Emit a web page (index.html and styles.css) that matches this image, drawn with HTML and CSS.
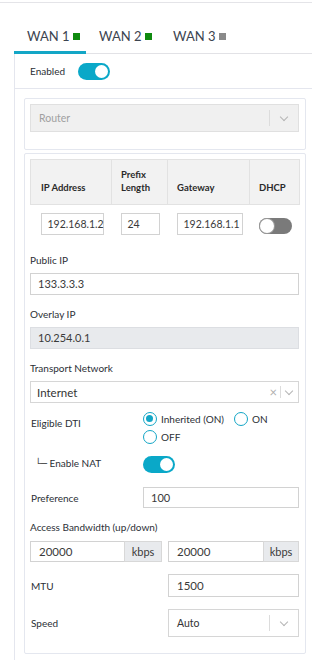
FILE: index.html
```html
<!DOCTYPE html>
<html lang="en">
<head>
    <meta charset="UTF-8">
    <meta name="viewport" content="width=device-width, initial-scale=1.0">
    <title>WAN</title>
    <link rel="stylesheet" href="styles.css">
</head>
<body>
    <div class="top-line"></div>

    <div class="wrap">
        <div class="tabs">
            <div class="tab active">WAN 1<span class="dot green"></span></div>
            <div class="tab">WAN 2<span class="dot green"></span></div>
            <div class="tab">WAN 3<span class="dot grey"></span></div>
        </div>

        <div class="panel">
            <div class="enabled-row">
                <span class="label">Enabled</span>
                <span class="toggle on"></span>
            </div>

            <div class="panel-body">
                <div class="card card-mode">
                    <div class="select disabled">
                        <span class="select-value">Router</span>
                        <span class="sep"></span>
                        <span class="chev"></span>
                    </div>
                </div>

                <div class="card card-main">
                    <table class="ip-table">
                        <colgroup>
                            <col class="col-ip">
                            <col class="col-prefix">
                            <col class="col-gw">
                            <col class="col-dhcp">
                        </colgroup>
                        <thead>
                            <tr>
                                <th>IP Address</th>
                                <th>Prefix<br>Length</th>
                                <th>Gateway</th>
                                <th>DHCP</th>
                            </tr>
                        </thead>
                        <tbody>
                            <tr>
                                <td><div class="input in-ip">192.168.1.2</div></td>
                                <td><div class="input in-prefix">24</div></td>
                                <td><div class="input in-gw">192.168.1.1</div></td>
                                <td><span class="toggle off"></span></td>
                            </tr>
                        </tbody>
                    </table>

                    <div class="group first">
                        <div class="label">Public IP</div>
                        <div class="input wide">133.3.3.3</div>
                    </div>

                    <div class="group">
                        <div class="label">Overlay IP</div>
                        <div class="input wide readonly">10.254.0.1</div>
                    </div>

                    <div class="group">
                        <div class="label">Transport Network</div>
                        <div class="select transport">
                            <span class="select-value">Internet</span>
                            <span class="clear">&times;</span>
                            <span class="sep short"></span>
                            <span class="chev"></span>
                        </div>
                    </div>

                    <div class="row dti-row">
                        <div class="label">Eligible DTI</div>
                        <div class="radios">
                            <span class="radio-item"><span class="radio checked"></span>Inherited (ON)</span>
                            <span class="radio-item"><span class="radio"></span>ON</span>
                            <span class="radio-item"><span class="radio"></span>OFF</span>
                        </div>
                    </div>

                    <div class="row nat-row">
                        <div class="label nat-label"><span class="tree">└─</span> Enable NAT</div>
                        <div><span class="toggle on"></span></div>
                    </div>

                    <div class="row pref-row">
                        <div class="label">Preference</div>
                        <div class="input">100</div>
                    </div>

                    <div class="group bw-group">
                        <div class="label">Access Bandwidth (up/down)</div>
                        <div class="halves">
                            <div class="input-group">
                                <div class="input">20000</div>
                                <span class="addon">kbps</span>
                            </div>
                            <div class="input-group">
                                <div class="input">20000</div>
                                <span class="addon">kbps</span>
                            </div>
                        </div>
                    </div>

                    <div class="halves half-row mtu-row">
                        <div class="label">MTU</div>
                        <div class="input">1500</div>
                    </div>

                    <div class="halves half-row speed-row">
                        <div class="label">Speed</div>
                        <div class="select speed">
                            <span class="select-value">Auto</span>
                            <span class="sep"></span>
                            <span class="chev"></span>
                        </div>
                    </div>
                </div>
            </div>
        </div>
    </div>
</body>
</html>
```

FILE: styles.css
```css
body {
    margin: 0;
    background: #ffffff;
    font-family: Lato, "Open Sans", sans-serif;
    color: #333;
    overflow: hidden;
    height: 660px;
}

.top-line {
    margin-top: 2px;
    border-top: 1px solid #e4e4e8;
}

.wrap {
    padding-left: 14px;
}

/* Tabs */
.tabs {
    display: flex;
    border-bottom: 1px solid #e2e2e6;
    padding-top: 24px;
}

.tab {
    font-size: 13px;
    line-height: 18px;
    color: #3c4450;
    padding: 0 0 6px 13px;
    border-bottom: 3px solid transparent;
    margin-bottom: -1px;
    display: flex;
    align-items: center;
}

.tab:nth-child(1) {
    width: 59px;
}

.tab:nth-child(2) {
    width: 61px;
}

.tab.active {
    border-bottom-color: #13a6c6;
}

.dot {
    display: inline-block;
    width: 7px;
    height: 7px;
    margin-left: 3px;
    margin-top: 1px;
}

.dot.green {
    background: #0f8a0f;
}

.dot.grey {
    background: #8a8a8a;
}

/* Panel */
.panel {
    border-left: 1px solid #e4e6ee;
    height: 620px;
}

.enabled-row {
    height: 34px;
    border-bottom: 1px solid #e4e6ee;
    display: flex;
    align-items: center;
    padding-left: 15px;
}

.enabled-row .label {
    margin-right: 13px;
}

.label {
    font-size: 10px;
    line-height: 14px;
    color: #2b2f36;
}

.panel-body {
    padding: 9px 6px 0 9px;
}

.card {
    border: 1px solid #e4e7ef;
    border-radius: 2px;
}

.card-mode {
    padding: 5px 6px 17px 5px;
}

.card-main {
    margin-top: 3px;
    padding: 5px 6px 16px 5px;
}

/* Toggle */
.toggle {
    display: inline-block;
    position: relative;
    width: 32px;
    height: 17px;
    border-radius: 9px;
    background: #0aa8c8;
    vertical-align: middle;
}

.toggle::after {
    content: "";
    position: absolute;
    top: 2px;
    right: 2px;
    width: 13px;
    height: 13px;
    border-radius: 50%;
    background: #fff;
}

.toggle.off {
    background: #7a7a7a;
    width: 33px;
    height: 16px;
}

.toggle.off::after {
    right: auto;
    left: 1px;
    top: 1px;
    width: 14px;
    height: 14px;
    box-shadow: 0 0 0 1px #9a9a9a;
}

/* Selects */
.select {
    display: flex;
    align-items: center;
    border: 1px solid #d6d6d6;
    background: #fff;
    height: 20px;
    padding-left: 6px;
    font-size: 11.5px;
    color: #333;
}

.select.disabled {
    height: 26px;
    background: #f0f0f0;
    border-color: #e0e0e0;
    color: #a0a0a0;
    font-size: 10.5px;
    padding-left: 8px;
}

.select-value {
    flex: 1;
}

.sep {
    width: 1px;
    height: 16px;
    background: #dcdcdc;
}

.sep.short {
    height: 12px;
}

.chev {
    width: 5px;
    height: 5px;
    border-right: 1px solid #b5b5b5;
    border-bottom: 1px solid #b5b5b5;
    transform: rotate(45deg);
    margin: -3px 11px 0 11px;
}

.transport .chev {
    margin: -3px 6px 0 5px;
}

.clear {
    color: #b0b0b0;
    font-size: 13px;
    margin-right: 3px;
}

.speed {
    height: 26px;
    padding-left: 8px;
    font-size: 10.5px;
}

/* Inputs */
.input {
    box-sizing: border-box;
    height: 22px;
    border: 1px solid #d2d2d2;
    background: #fff;
    font-size: 11px;
    line-height: 20px;
    padding: 0 7px;
    color: #3a3a3a;
}

.input.readonly {
    background: #e8eaed;
    border-color: #dcdee2;
}

.group {
    margin-top: 12px;
}

.group.first {
    margin-top: 8px;
}

.group .label {
    margin-bottom: 6px;
}

/* IP table */
.ip-table {
    width: 269px;
    border-collapse: collapse;
    table-layout: fixed;
}

.col-ip { width: 81px; }
.col-prefix { width: 56px; }
.col-gw { width: 82px; }
.col-dhcp { width: 50px; }

.ip-table thead tr {
    height: 45px;
}

.ip-table th {
    background: #f2f2f2;
    border: 1px solid #e2e2e2;
    font-size: 9.5px;
    font-weight: 700;
    line-height: 13px;
    text-align: left;
    vertical-align: bottom;
    padding: 0 2px 10px 9px;
    color: #2a2a2a;
    overflow: hidden;
    white-space: nowrap;
}

.ip-table th:first-child {
    padding-left: 10px;
}

.ip-table td {
    padding: 8px 0 10px 9px;
    vertical-align: top;
}

.ip-table td:first-child {
    padding-left: 10px;
}

.ip-table .input {
    padding: 0 6px;
    font-size: 10.5px;
}

.in-ip { width: 63px; }
.in-prefix { width: 39px; }
.in-gw { width: 66px; }

.ip-table .toggle {
    margin-top: 3px;
}

/* Label / value rows */
.row {
    display: grid;
    grid-template-columns: 113px 1fr;
}

.row .label {
    padding-left: 1px;
}

.dti-row {
    margin-top: 9px;
    align-items: start;
}

.dti-row .label {
    padding-top: 4px;
}

.radios {
    display: flex;
    flex-wrap: wrap;
    row-gap: 4px;
}

.radio-item {
    display: flex;
    align-items: center;
    font-size: 10px;
    color: #2b2f36;
    margin-right: 10px;
}

.radio-item:nth-child(3) {
    width: 100%;
}

.radio {
    box-sizing: border-box;
    width: 14px;
    height: 14px;
    border: 1.5px solid #13a6c6;
    border-radius: 50%;
    margin-right: 4px;
    position: relative;
}

.radio.checked::after {
    content: "";
    position: absolute;
    top: 2px;
    left: 2px;
    width: 7px;
    height: 7px;
    border-radius: 50%;
    background: #13a6c6;
}

.nat-row {
    margin-top: 9px;
    align-items: center;
}

.nat-label {
    padding-left: 5px !important;
}

.tree {
    font-family: "DejaVu Sans Mono", monospace;
    font-size: 10px;
    color: #444;
}

.pref-row {
    margin-top: 14px;
    align-items: center;
}

.pref-row .input {
    height: 21px;
    line-height: 19px;
}

/* Halves */
.halves {
    display: grid;
    grid-template-columns: 132px 131px;
    column-gap: 6px;
}

.half-row {
    margin-top: 12px;
    align-items: center;
}

.half-row > .label {
    padding-left: 1px;
}

.bw-group .label {
    margin-bottom: 7px;
}

.input-group {
    display: flex;
    height: 21px;
}

.input-group .input {
    flex: 1;
    height: 21px;
    line-height: 19px;
    border-right: none;
    padding-left: 8px;
    font-size: 11.5px;
}

.addon {
    width: 38px;
    box-sizing: border-box;
    background: #e8eaed;
    border: 1px solid #d8d8d8;
    font-size: 11px;
    line-height: 19px;
    text-align: center;
    color: #3a3a3a;
}

.halves .input-group:last-child .addon {
    width: 36px;
}

.mtu-row .input {
    height: 23px;
    line-height: 21px;
    padding-left: 8px;
    font-size: 11.5px;
}

.speed-row .select {
    height: 26px;
}
```
